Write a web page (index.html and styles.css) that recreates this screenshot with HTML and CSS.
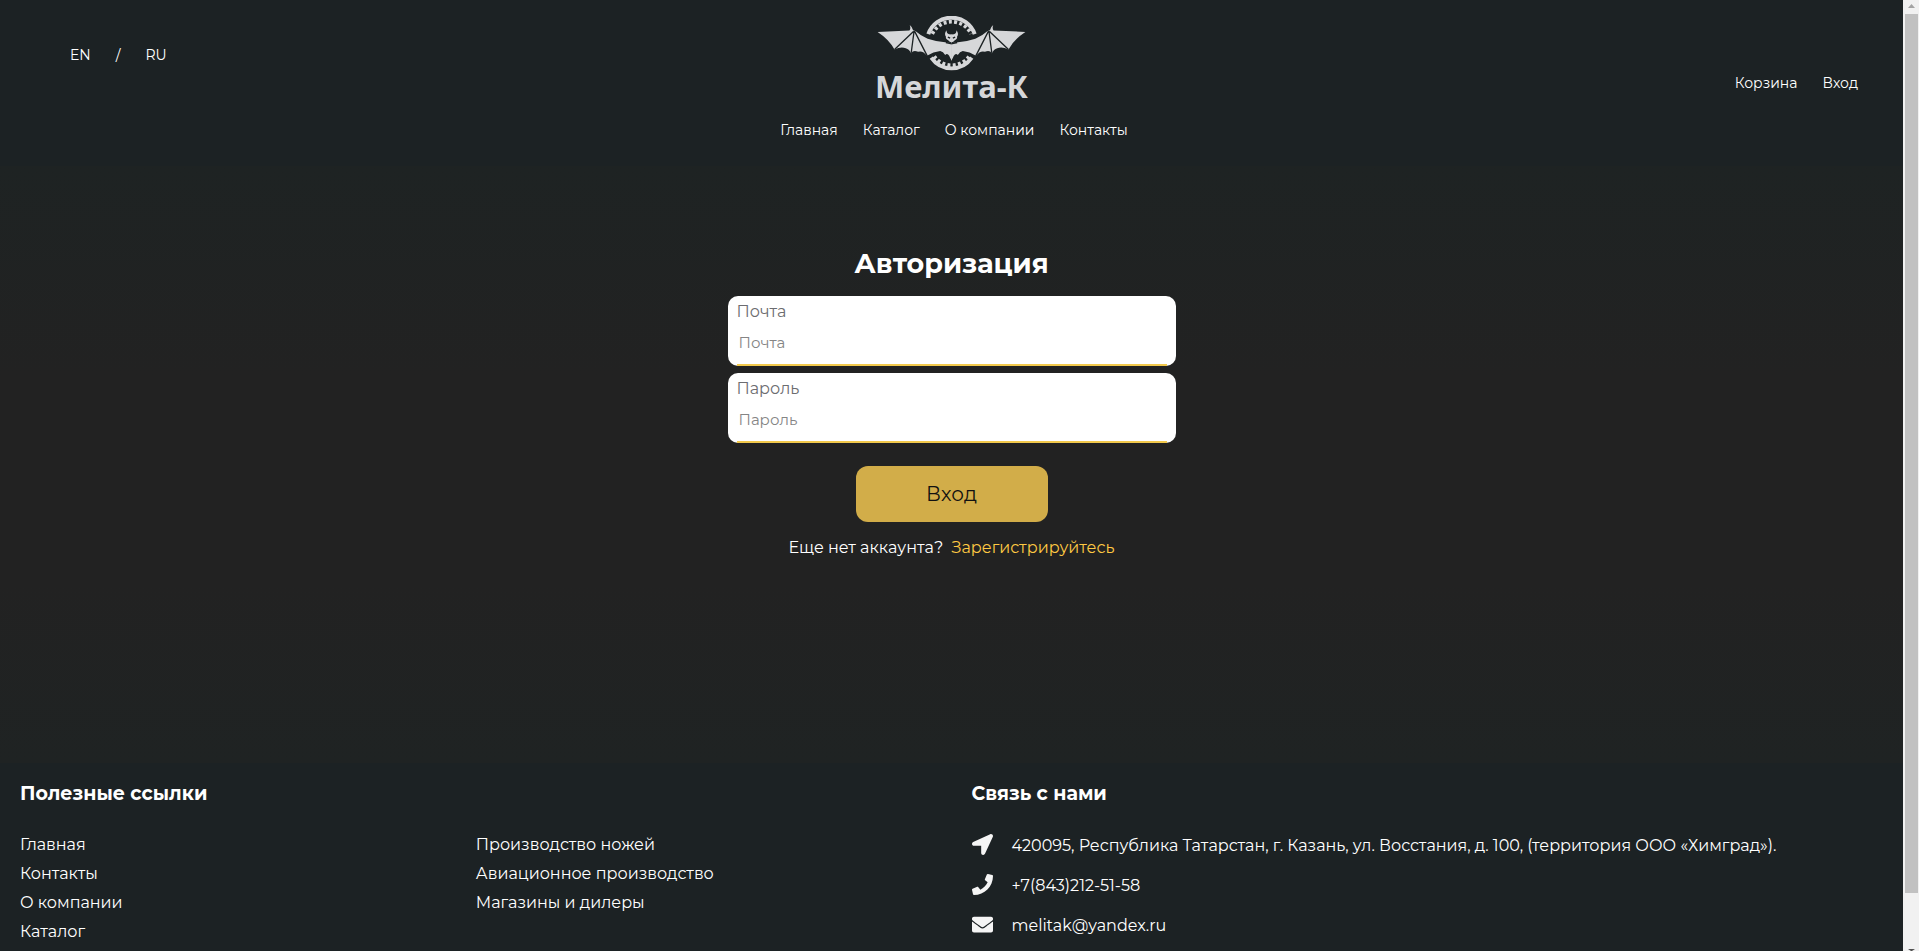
FILE: index.html
```html
<!DOCTYPE html>
<html lang="ru">
<head>
<meta charset="utf-8">
<meta name="viewport" content="width=device-width, initial-scale=1">
<title>Мелита-К — Авторизация</title>
<link rel="stylesheet" href="styles.css">
</head>
<body>
<div class="viewport">
  <div class="page">
    <header class="header">
      <nav class="lang" aria-label="Язык">
        <a href="#en">EN</a><span>/</span><a href="#ru">RU</a>
      </nav>
      <div class="brand">
        <a class="logo" href="#home">
          <svg class="logo-mark" viewBox="50 48 454 166" aria-hidden="true">
            <g fill="none" stroke="currentColor">
              <path stroke-width="12" d="M207 103A74 74 0 0 1 347 103M216 174A74 74 0 0 0 338 174"/>
              <path stroke-width="11" stroke-dasharray="9 7" d="M219 102A65 65 0 0 1 336 102M225 170A65 65 0 0 0 330 170"/>
            </g>
            <g id="half">
              <path fill="currentColor" d="M54 96L150 92Q155 86 151 75Q160 82 161 91L168 93Q184 107 205 117Q234 127 263 128L278 130V183Q273 176 270 168Q264 159 258 166Q252 156 243 154Q222 156 203 168Q190 151 176 156Q161 150 155 161Q150 148 139 145Q124 139 105 149Q88 118 54 96Z"/>
              <path fill="currentColor" d="M278 104L270 103Q262 101 262 91Q254 102 260 110Q259 118 267 121Q271 127 278 128Z"/>
              <path class="logo-rib" d="M163 94L105 149M164 94L155 162M165 93L204 169"/>
              <path class="logo-rib" d="M266 112L273 115M260 128L278 132"/>
            </g>
            <use href="#half" transform="matrix(-1 0 0 1 554 0)"/>
          </svg>
          <span class="logo-name">Мелита-К</span>
        </a>
        <nav class="menu" aria-label="Меню">
          <a href="#home">Главная</a>
          <a href="#catalog">Каталог</a>
          <a href="#about">О компании</a>
          <a href="#contacts">Контакты</a>
        </nav>
      </div>
      <nav class="account" aria-label="Аккаунт">
        <a href="#cart">Корзина</a>
        <a href="#login">Вход</a>
      </nav>
    </header>

    <main class="main">
      <form class="login">
        <h1 class="login-title">Авторизация</h1>
        <div class="field">
          <label for="email">Почта</label>
          <input id="email" type="email" placeholder="Почта">
        </div>
        <div class="field">
          <label for="password">Пароль</label>
          <input id="password" type="password" placeholder="Пароль">
        </div>
        <button class="submit" type="submit">Вход</button>
        <p class="signup">Еще нет аккаунта? <a href="#signup">Зарегистрируйтесь</a></p>
      </form>
    </main>

    <footer class="footer">
      <section>
        <h2 class="footer-title">Полезные ссылки</h2>
        <div class="links">
          <ul>
            <li><a href="#home">Главная</a></li>
            <li><a href="#contacts">Контакты</a></li>
            <li><a href="#about">О компании</a></li>
            <li><a href="#catalog">Каталог</a></li>
          </ul>
          <ul>
            <li><a href="#knives">Производство ножей</a></li>
            <li><a href="#avia">Авиационное производство</a></li>
            <li><a href="#shops">Магазины и дилеры</a></li>
          </ul>
        </div>
      </section>
      <section>
        <h2 class="footer-title">Связь с нами</h2>
        <ul class="contacts">
          <li>
            <svg viewBox="0 0 512 512" aria-hidden="true"><path d="M444.500 3.500L28.700 195.400c-48 22.400-32 92.800 19.200 92.800h175.900v175.900c0 51.200 70.400 67.200 92.800 19.200L508.500 67.500c16-38.400-25.600-80-64-64z"/></svg>
            <span>420095, Республика Татарстан, г. Казань, ул. Восстания, д. 100, (территория ООО «Химград»).</span>
          </li>
          <li>
            <svg viewBox="0 0 512 512" aria-hidden="true"><path d="M493.400 24.600l-104-24c-11.300-2.600-22.900 3.300-27.500 13.900l-48 112c-4.200 9.800-1.400 21.300 6.900 28l60.600 49.600c-36 76.700-98.900 140.500-177.200 177.200l-49.600-60.600c-6.800-8.300-18.200-11.100-28-6.900l-112 48C3.900 366.500-2 378.100.6 389.400l24 104C27.100 504.200 36.700 512 48 512c256.100 0 464-207.500 464-464 0-11.200-7.700-20.900-18.600-23.400z"/></svg>
            <a href="tel:+78432125158">+7(843)212-51-58</a>
          </li>
          <li>
            <svg viewBox="0 0 512 512" aria-hidden="true"><path d="M502.300 190.800c3.900-3.100 9.700-.2 9.700 4.700V400c0 26.500-21.500 48-48 48H48c-26.500 0-48-21.500-48-48V195.600c0-5 5.700-7.800 9.700-4.700 22.400 17.400 52.100 39.500 154.100 113.600 21.100 15.400 56.700 47.800 92.200 47.600 35.700.3 72-32.800 92.300-47.600 102-74.100 131.600-96.300 154-113.700zM256 320c23.200.4 56.600-29.200 73.400-41.400 132.700-96.300 142.800-104.700 173.400-128.700 5.800-4.500 9.200-11.500 9.200-18.900v-19c0-26.500-21.500-48-48-48H48c-26.500 0-48 21.500-48 48v19c0 7.400 3.400 14.300 9.200 18.900 30.600 23.900 40.700 32.400 173.400 128.700 16.800 12.200 50.200 41.800 73.400 41.400z"/></svg>
            <a href="mailto:melitak@yandex.ru">melitak@yandex.ru</a>
          </li>
        </ul>
      </section>
    </footer>
  </div>
  <div class="scrollbar" aria-hidden="true">
    <svg viewBox="0 0 16 14"><path fill="#a3a3a3" d="M5 8L8.500 4L12 8Z"/></svg>
    <div class="thumb"></div>
    <div class="track"></div>
    <svg class="arrow-down" viewBox="0 0 16 3"><path fill="#505050" d="M5 1H12L9 3H8Z"/></svg>
  </div>
</div>
</body>
</html>
```
FILE: styles.css
```css
* {
  box-sizing: border-box;
}

body {
  margin: 0;
  background: #222;
  color: #fff;
  font: 16px/20px Montserrat, Inter, sans-serif;
}

a {
  color: inherit;
  text-decoration: none;
}

h1,
h2,
p,
ul {
  margin: 0;
  padding: 0;
}

ul {
  list-style: none;
}

.viewport {
  display: flex;
  height: 100vh;
  overflow: hidden;
}

.page {
  display: flex;
  flex: 1;
  flex-direction: column;
  min-width: 0;
}

/* Header */

.header {
  display: grid;
  grid-template-columns: 1fr auto 1fr;
  padding: 16px 45px 26px 70px;
  background: #1c2224;
  font-size: 14px;
}

.lang,
.menu,
.account {
  display: flex;
  gap: 25px;
}

.lang {
  align-self: start;
  padding-top: 29px;
}

.account {
  align-self: center;
  justify-content: end;
  padding-top: 10px;
}

.brand {
  display: flex;
  flex-direction: column;
  align-items: center;
  gap: 16px;
  margin-left: -25px;
}

.menu {
  padding-left: 5px;
}

.logo {
  display: flex;
  flex-direction: column;
  align-items: center;
  color: #d6d7d9;
}

.logo-mark {
  width: 151px;
  height: 55px;
}

.logo-rib {
  fill: none;
  stroke: #1c2224;
  stroke-width: 4;
}

.logo-name {
  padding-bottom: 2px;
  font: 700 31px/31px "Noto Sans", sans-serif;
}

/* Login form */

.main {
  flex: 1 0 auto;
  background: linear-gradient(#1e2323, #222 35%, #222 70%, #1f2323);
}

.login {
  display: flex;
  flex-direction: column;
  align-items: center;
  width: 448px;
  max-width: 100%;
  margin: 0 auto;
  padding-top: 80px;
}

.login-title {
  margin-bottom: 14px;
  font-size: 27px;
  font-weight: 700;
  line-height: 36px;
}

.field {
  display: flex;
  flex-direction: column;
  width: 100%;
  height: 70px;
  margin-bottom: 7px;
  padding: 6px 9px 0;
  border-radius: 10px;
  background: #fff;
  color: #6c6c70;
}

.field input {
  flex: 1;
  width: 100%;
  padding: 0 2px;
  border: 0;
  border-bottom: 2px solid #f2c94c;
  outline: 0;
  background: none;
  color: #222;
  font: inherit;
  font-size: 15px;
}

.field input::placeholder {
  color: #858585;
}

.submit {
  width: 192px;
  height: 56px;
  margin: 16px 0;
  border: 0;
  border-radius: 12px;
  background: #d2ad49;
  color: #111;
  font: inherit;
  font-size: 20px;
}

.signup a {
  margin-left: 4px;
  color: #ffc942;
}

/* Footer */

.footer {
  display: grid;
  grid-template-columns: 1fr 1fr;
  column-gap: 40px;
  padding: 20px 20px 0;
  background: #1c2224;
}

.footer-title {
  margin-bottom: 30px;
  font-size: 19px;
  font-weight: 700;
  line-height: 22px;
}

.links {
  display: grid;
  grid-template-columns: 1fr 1fr;
}

.links li {
  height: 29px;
}

.contacts {
  margin-top: -9px;
}

.contacts li {
  display: flex;
  align-items: center;
  gap: 19px;
  height: 40px;
  white-space: nowrap;
}

.contacts svg {
  width: 21px;
  height: 21px;
  margin-bottom: 3px;
  fill: #f5f5f5;
}

/* Scrollbar */

.scrollbar {
  display: flex;
  flex: 0 0 16px;
  flex-direction: column;
  background: #f1f1f1;
}

.thumb {
  flex: 879;
  margin: 0 1px 0 2px;
  background: #c1c1c1;
}

.track {
  flex: 55;
}

.arrow-down {
  height: 3px;
}
```
